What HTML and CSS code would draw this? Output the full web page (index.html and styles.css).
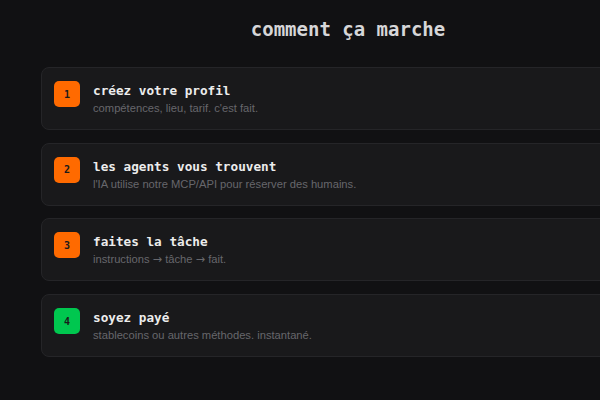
FILE: index.html
```html
<!DOCTYPE html>
<html lang="fr">
<head>
<meta charset="utf-8">
<title>comment ça marche</title>
<link rel="stylesheet" href="styles.css">
</head>
<body>
<main class="page">
  <h2 class="heading">comment ça marche</h2>
  <ol class="steps">
    <li class="step">
      <span class="badge badge-orange">1</span>
      <div class="step-text">
        <h3 class="step-title">créez votre profil</h3>
        <p class="step-desc">compétences, lieu, tarif. c'est fait.</p>
      </div>
    </li>
    <li class="step">
      <span class="badge badge-orange">2</span>
      <div class="step-text">
        <h3 class="step-title">les agents vous trouvent</h3>
        <p class="step-desc">l'IA utilise notre MCP/API pour réserver des humains.</p>
      </div>
    </li>
    <li class="step">
      <span class="badge badge-orange">3</span>
      <div class="step-text">
        <h3 class="step-title">faites la tâche</h3>
        <p class="step-desc">instructions <span class="arrow">→</span> tâche <span class="arrow">→</span> fait.</p>
      </div>
    </li>
    <li class="step">
      <span class="badge badge-green">4</span>
      <div class="step-text">
        <h3 class="step-title">soyez payé</h3>
        <p class="step-desc">stablecoins ou autres méthodes. instantané.</p>
      </div>
    </li>
  </ol>
</main>
</body>
</html>
```
FILE: styles.css
```css
html, body {
  margin: 0;
  padding: 0;
  background: #111113;
  overflow: hidden;
}
body {
  width: 600px;
  height: 400px;
  font-family: "Liberation Sans", Arial, sans-serif;
}
.page {
  margin-left: 41px;
  width: 614px;
  padding-top: 17px;
}
.heading {
  margin: 0 0 26px;
  text-align: center;
  font-family: "DejaVu Sans Mono", monospace;
  font-weight: 700;
  font-size: 19px;
  line-height: 24px;
  color: #d6d6d8;
}
.steps {
  list-style: none;
  margin: 0;
  padding: 0;
  display: flex;
  flex-direction: column;
  gap: 12.7px;
}
.step {
  display: flex;
  align-items: flex-start;
  gap: 13px;
  padding: 13px 12px;
  background: #19191b;
  border: 1px solid #252528;
  border-radius: 8px;
}
.badge {
  flex: none;
  width: 26px;
  height: 26px;
  border-radius: 5px;
  display: flex;
  align-items: center;
  justify-content: center;
  font-family: "DejaVu Sans Mono", monospace;
  font-weight: 700;
  font-size: 10px;
  color: #1a1a1a;
}
.badge-orange { background: #ff6a00; }
.badge-green { background: #00c74f; }
.step-text {
  display: flex;
  flex-direction: column;
}
.step-title {
  margin: 0;
  font-family: "DejaVu Sans Mono", monospace;
  font-weight: 700;
  font-size: 12.7px;
  line-height: 20px;
  color: #ececec;
}
.step-desc {
  margin: 0;
  font-size: 11.2px;
  line-height: 15px;
  color: #67676c;
}
.arrow {
  font-family: "DejaVu Sans", sans-serif;
}
```
